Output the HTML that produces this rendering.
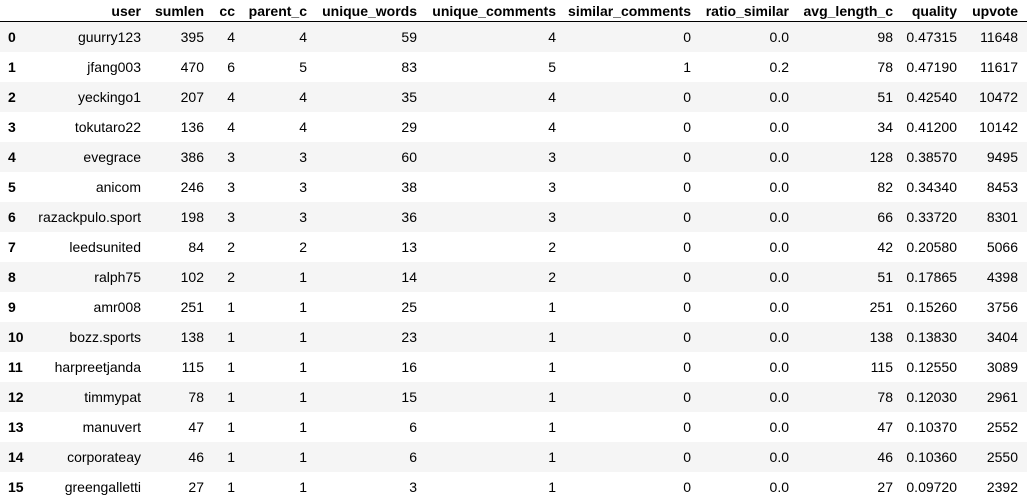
<!DOCTYPE html>
<html><head><style>
body{margin:0;background:#fff;font-family:"Liberation Sans",Arial,sans-serif;font-size:14px;color:#000;}
table{border-collapse:collapse;table-layout:fixed;width:1027px;}
td,th{padding:0;text-align:right;white-space:nowrap;overflow:visible;}
thead th{height:21px;font-weight:bold;vertical-align:middle;border-bottom:1px solid #000;}
tbody td,tbody th{height:30px;}
tbody th{text-align:left;padding-left:8px;font-weight:bold;}
tbody tr:nth-child(odd){background:#f5f5f5;}
</style></head><body>
<table>
<colgroup><col style="width:30px"><col style="width:111px"><col style="width:63px"><col style="width:31px"><col style="width:72px"><col style="width:110px"><col style="width:139px"><col style="width:135px"><col style="width:98px"><col style="width:104px"><col style="width:64px"><col style="width:61px"><col style="width:9px"></colgroup>
<thead><tr><th></th><th>user</th><th>sumlen</th><th>cc</th><th>parent_c</th><th>unique_words</th><th>unique_comments</th><th>similar_comments</th><th>ratio_similar</th><th>avg_length_c</th><th>quality</th><th>upvote</th><th></th></tr></thead>
<tbody>
<tr><th>0</th><td>guurry123</td><td>395</td><td>4</td><td>4</td><td>59</td><td>4</td><td>0</td><td>0.0</td><td>98</td><td>0.47315</td><td>11648</td><td></td></tr>
<tr><th>1</th><td>jfang003</td><td>470</td><td>6</td><td>5</td><td>83</td><td>5</td><td>1</td><td>0.2</td><td>78</td><td>0.47190</td><td>11617</td><td></td></tr>
<tr><th>2</th><td>yeckingo1</td><td>207</td><td>4</td><td>4</td><td>35</td><td>4</td><td>0</td><td>0.0</td><td>51</td><td>0.42540</td><td>10472</td><td></td></tr>
<tr><th>3</th><td>tokutaro22</td><td>136</td><td>4</td><td>4</td><td>29</td><td>4</td><td>0</td><td>0.0</td><td>34</td><td>0.41200</td><td>10142</td><td></td></tr>
<tr><th>4</th><td>evegrace</td><td>386</td><td>3</td><td>3</td><td>60</td><td>3</td><td>0</td><td>0.0</td><td>128</td><td>0.38570</td><td>9495</td><td></td></tr>
<tr><th>5</th><td>anicom</td><td>246</td><td>3</td><td>3</td><td>38</td><td>3</td><td>0</td><td>0.0</td><td>82</td><td>0.34340</td><td>8453</td><td></td></tr>
<tr><th>6</th><td>razackpulo.sport</td><td>198</td><td>3</td><td>3</td><td>36</td><td>3</td><td>0</td><td>0.0</td><td>66</td><td>0.33720</td><td>8301</td><td></td></tr>
<tr><th>7</th><td>leedsunited</td><td>84</td><td>2</td><td>2</td><td>13</td><td>2</td><td>0</td><td>0.0</td><td>42</td><td>0.20580</td><td>5066</td><td></td></tr>
<tr><th>8</th><td>ralph75</td><td>102</td><td>2</td><td>1</td><td>14</td><td>2</td><td>0</td><td>0.0</td><td>51</td><td>0.17865</td><td>4398</td><td></td></tr>
<tr><th>9</th><td>amr008</td><td>251</td><td>1</td><td>1</td><td>25</td><td>1</td><td>0</td><td>0.0</td><td>251</td><td>0.15260</td><td>3756</td><td></td></tr>
<tr><th>10</th><td>bozz.sports</td><td>138</td><td>1</td><td>1</td><td>23</td><td>1</td><td>0</td><td>0.0</td><td>138</td><td>0.13830</td><td>3404</td><td></td></tr>
<tr><th>11</th><td>harpreetjanda</td><td>115</td><td>1</td><td>1</td><td>16</td><td>1</td><td>0</td><td>0.0</td><td>115</td><td>0.12550</td><td>3089</td><td></td></tr>
<tr><th>12</th><td>timmypat</td><td>78</td><td>1</td><td>1</td><td>15</td><td>1</td><td>0</td><td>0.0</td><td>78</td><td>0.12030</td><td>2961</td><td></td></tr>
<tr><th>13</th><td>manuvert</td><td>47</td><td>1</td><td>1</td><td>6</td><td>1</td><td>0</td><td>0.0</td><td>47</td><td>0.10370</td><td>2552</td><td></td></tr>
<tr><th>14</th><td>corporateay</td><td>46</td><td>1</td><td>1</td><td>6</td><td>1</td><td>0</td><td>0.0</td><td>46</td><td>0.10360</td><td>2550</td><td></td></tr>
<tr><th>15</th><td>greengalletti</td><td>27</td><td>1</td><td>1</td><td>3</td><td>1</td><td>0</td><td>0.0</td><td>27</td><td>0.09720</td><td>2392</td><td></td></tr>
</tbody></table>
</body></html>
